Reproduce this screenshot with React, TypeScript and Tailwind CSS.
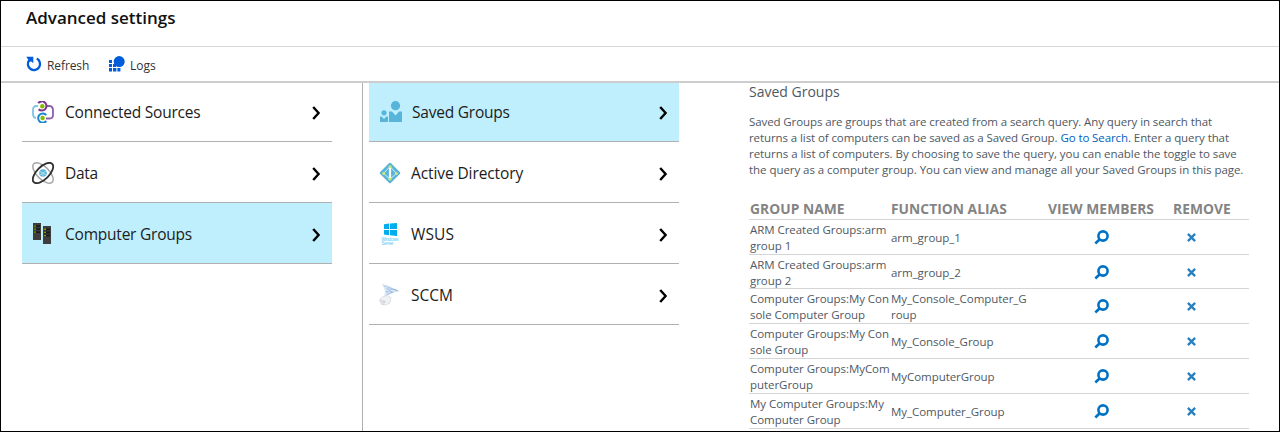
import type { ReactNode } from 'react';

function RefreshIcon() {
  return (
    <svg width="16" height="17" viewBox="0 0 16 17" className="block">
      <path d="M10.8 2.6A6.1 6.1 0 1 1 3 4.4" fill="none" stroke="#015cda" strokeWidth="2.3" />
      <path d="M0.3 0.7H7.3V7.2L5 5.2L3.6 6.2L1.9 3.3Z" fill="#015cda" />
    </svg>
  );
}

function LogsIcon() {
  return (
    <svg width="16" height="16" viewBox="0 0 16 16" className="block" fill="#015cda">
      <circle cx="10.2" cy="5.6" r="5.5" />
      <path d="M0 4h3v3H0zM0 8h3v3H0zM0 12h3v3.4H0zM4 8h3v3H4zM4 12h3.4v3.4H4zM8.4 12h3v3.4h-3z" />
    </svg>
  );
}

function SourcesIcon() {
  return (
    <svg width="22" height="22" viewBox="0 0 22 22" className="block" fill="none" strokeWidth="1.8">
      <path d="M6 5H4.5Q1 5 1 8.5V13Q1 16.5 4 17.2" stroke="#7fc4e6" />
      <path d="M15 5h2.5Q21 5.5 21 9v5q0 3.5-3.5 3.5H14" stroke="#8d5fae" />
      <path d="M6.2 2.2A4.6 4.6 0 1 1 6.6 8.2" stroke="#7b3591" strokeWidth="2" />
      <path d="M14.3 14.2A4.6 4.6 0 1 0 14.3 20" stroke="#1f87d2" strokeWidth="2" />
      <circle cx="10.3" cy="5.2" r="2.2" fill="#84bd00" />
      <circle cx="10.6" cy="17" r="2.2" fill="#84bd00" />
    </svg>
  );
}

function DataIcon() {
  return (
    <svg width="22" height="22" viewBox="0 0 22 22" className="block" fill="none">
      <ellipse cx="11" cy="11" rx="13" ry="6.2" transform="rotate(45 11 11)" stroke="#a8a8a8" strokeWidth="1.5" />
      <circle cx="11" cy="11" r="3.8" fill="#59b4d9" />
      <path d="M8 9.5l3 1.5 3-2M11 11v3.5M8 13l3-2 3 2" stroke="#c4e6f4" strokeWidth=".8" />
      <ellipse cx="11" cy="11" rx="13" ry="6.2" transform="rotate(-45 11 11)" stroke="#303030" strokeWidth="1.8" />
    </svg>
  );
}

function ServersIcon() {
  return (
    <svg width="20" height="22" viewBox="0 0 20 22" className="block">
      <path d="M1 0h8v17H1z" fill="#3e3e3e" />
      <path d="M11 3h8v18H11z" fill="#3e3e3e" />
      <path d="M2 2.2h6v1.8H2zM2 5.2h6V7H2zM2 8.2h6V10H2zM12 5.4h6v1.8h-6zM12 8.6h6v1.8h-6zM12 11.8h6v1.8h-6z" fill="#1b1b1b" />
      <path d="M2.3 2.4h1.5v1.3H2.3zM2.3 5.4h1.5v1.3H2.3zM2.3 8.4h1.5v1.3H2.3zM12.3 5.6h1.5v1.3h-1.5zM12.3 8.8h1.5v1.3h-1.5zM12.3 12h1.5v1.3h-1.5z" fill="#a4c400" />
    </svg>
  );
}

function PeopleIcon() {
  return (
    <svg width="23" height="22" viewBox="-1 0 23 22" className="block" fill="#59b4d9">
      <circle cx="15.5" cy="4.7" r="4.6" />
      <path d="M9 10.5h3l3.5 4 3.5-4h3V21H9z" />
      <circle cx="4" cy="11.8" r="2.6" />
      <path d="M0 15.5h1.8L4 18l2.2-2.5H8V21H0z" />
    </svg>
  );
}

function DirectoryIcon() {
  return (
    <svg width="22" height="22" viewBox="0 0 22 22" className="block">
      <rect x="3.3" y="3.3" width="15.4" height="15.4" rx="1.5" transform="rotate(45 11 11)" fill="#59b4d9" />
      <path d="M11 4.5L4.5 11.5L11 17L17.5 11.5Z" fill="none" stroke="#d3ecf6" strokeWidth="1" />
      <path d="M11 5v12" stroke="#fff" strokeWidth="2.2" />
      <circle cx="11" cy="4.7" r="1.5" fill="#cde67a" />
      <circle cx="4.6" cy="11.5" r="1.5" fill="#cde67a" />
      <circle cx="17.4" cy="11.5" r="1.5" fill="#cde67a" />
      <circle cx="11" cy="17" r="1.6" fill="#cde67a" />
    </svg>
  );
}

function WindowsServerIcon() {
  return (
    <svg width="22" height="22" viewBox="0 0 22 22" className="block" fill="#00adef">
      <path d="M5 1.3L10 .6v5.4H5zM11 .5L18 0v6h-7zM5 7h5v5.2l-5-.7zM11 7h7V13l-7-.8z" />
      <text x="2.500" y="17.500" fontSize="4.500" textLength="17" opacity=".7" fontFamily="Liberation Sans, sans-serif">Windows</text>
      <text x="2.500" y="21.500" fontSize="4.500" textLength="12" opacity=".7" fontFamily="Liberation Sans, sans-serif">Server</text>
    </svg>
  );
}

function SystemCenterIcon() {
  return (
    <svg width="22" height="22" viewBox="0 0 22 22" className="block" fill="none" strokeLinejoin="round">
      <path d="M3.500 .5L9 2l10.500 5L13.500 8.500 5.500 12.500Q8 7 3.500 .5z" fill="#e6eff8" stroke="#c5d7ea" strokeWidth=".6" />
      <path d="M5 2l13.500 4.500-11-1.800 6 3.500-6.500-1 2 2.500M7.500 10.500l7-2.500" stroke="#7faadb" strokeWidth=".6" />
      <path d="M.3 16Q2.500 12 8.500 11.500L12 13.500 11 19Q7 22 2.500 20.500L.3 16z" fill="#f0f1f3" stroke="#d3d7db" strokeWidth=".7" />
      <path d="M1 16l5 1.500L4 20.500M2 18.500l4-1" stroke="#b9bec5" strokeWidth=".6" />
    </svg>
  );
}

function Chevron() {
  return (
    <svg width="9" height="15" viewBox="0 0 9 15" className="block shrink-0">
      <path d="M1.200 2L6.600 8L1.200 14" fill="none" stroke="#000" strokeWidth="2.400" />
    </svg>
  );
}

function SearchIcon() {
  return (
    <svg width="15" height="15" viewBox="0 0 15 15" className="block">
      <circle cx="9" cy="6" r="4.600" fill="none" stroke="#0072c6" strokeWidth="2.600" />
      <path d="M5.500 9.500L1.300 13.500" stroke="#0072c6" strokeWidth="2.600" />
    </svg>
  );
}

function RemoveIcon() {
  return (
    <svg width="9" height="9" viewBox="0 0 9 9" className="block">
      <path d="M.9.900l7.200 7.200M8.100.900L.9 8.100" stroke="#2a80be" strokeWidth="2.300" />
    </svg>
  );
}

type Item = { label: string; icon: ReactNode; text: string; selected?: boolean };

const settings: Item[] = [
  { label: 'Connected Sources', icon: <SourcesIcon />, text: 'tracking-[-0.22px]' },
  { label: 'Data', icon: <DataIcon />, text: 'tracking-[-0.3px]' },
  { label: 'Computer Groups', icon: <ServersIcon />, text: 'tracking-[-0.22px]', selected: true },
];

const groupTypes: Item[] = [
  { label: 'Saved Groups', icon: <PeopleIcon />, text: 'tracking-[-0.22px]', selected: true },
  { label: 'Active Directory', icon: <DirectoryIcon />, text: '-ml-px tracking-[-0.1px]' },
  { label: 'WSUS', icon: <WindowsServerIcon />, text: '-ml-px tracking-[0.1px]' },
  { label: 'SCCM', icon: <SystemCenterIcon />, text: '-ml-px tracking-[-0.05px]' },
];

function NavList({ items }: { items: Item[] }) {
  return (
    <ul className="w-[310px]">
      {items.map((item) => (
        <li
          key={item.label}
          className={`flex h-[61px] items-center border-b border-[#b0b0b0] pt-[2px] pr-[11px] pl-[10px] text-[15.5px] text-[#1c1c1c] first:h-[59px] first:pt-0 ${
            item.selected ? 'bg-[#bfeffd]' : 'bg-white'
          }`}
        >
          <span className="w-[33px]">{item.icon}</span>
          <span className={`grow pt-[2px] whitespace-nowrap ${item.text}`}>{item.label}</span>
          <Chevron />
        </li>
      ))}
    </ul>
  );
}

type Row = { name: string[]; alias: string[]; height: string };

const rows: Row[] = [
  { name: ['ARM Created Groups:arm', 'group 1'], alias: ['arm_group_1'], height: 'h-[35px]' },
  { name: ['ARM Created Groups:arm', 'group 2'], alias: ['arm_group_2'], height: 'h-[34px]' },
  { name: ['Computer Groups:My Con', 'sole Computer Group'], alias: ['My_Console_Computer_G', 'roup'], height: 'h-[35px]' },
  { name: ['Computer Groups:My Con', 'sole Group'], alias: ['My_Console_Group'], height: 'h-[35px]' },
  { name: ['Computer Groups:MyCom', 'puterGroup'], alias: ['MyComputerGroup'], height: 'h-[35px]' },
  { name: ['My Computer Groups:My', 'Computer Group'], alias: ['My_Computer_Group'], height: 'h-[35px]' },
];

function Lines({ lines }: { lines: string[] }) {
  return (
    <div className="flex h-[34px] flex-col justify-center pt-px whitespace-nowrap">
      {lines.map((line) => (
        <div key={line} className="h-4">{line}</div>
      ))}
    </div>
  );
}

const columns = 'grid grid-cols-[141px_157px_125px_76px] pl-px';

function GroupTable() {
  return (
    <div className="mt-[22px] w-[500px] text-[11.5px] leading-4 tracking-[-0.05px]">
      <div className={`${columns} h-[20px] border-b border-[#d5d5d5] pt-px text-[13.8px] font-bold tracking-[0.03px] text-[#848484]`}>
        <div>GROUP NAME</div>
        <div>FUNCTION ALIAS</div>
        <div>VIEW MEMBERS</div>
        <div>REMOVE</div>
      </div>
      {rows.map((row) => (
        <div key={row.name.join()} className={`${columns} ${row.height} border-b border-[#d5d5d5]`}>
          <Lines lines={row.name} />
          <Lines lines={row.alias} />
          <div className="pt-[10px] pl-[46px]"><SearchIcon /></div>
          <div className="pt-[13px] pl-[14px]"><RemoveIcon /></div>
        </div>
      ))}
    </div>
  );
}

export default function App() {
  return (
    <div className="flex h-[432px] w-[1280px] flex-col overflow-hidden border border-black bg-white font-['Open_Sans',sans-serif]">
      <header className="h-[46px] shrink-0 border-b border-[#d6d6d6] pt-[5px] pl-[25px]">
        <h1 className="text-[17px] leading-6 font-semibold text-[#111]">Advanced settings</h1>
      </header>
      <div className="flex h-[36px] shrink-0 items-center border-b-2 border-[#cdcdcd] pl-[25px] text-[12px] text-[#333]">
        <RefreshIcon />
        <span className="w-[67px] pt-[3px] pl-[5px] tracking-[-0.1px]">Refresh</span>
        <LogsIcon />
        <span className="pt-[3px] pl-[5px]">Logs</span>
      </div>
      <div className="flex min-h-0 grow">
        <nav className="w-[361px] shrink-0 pl-[21px]">
          <NavList items={settings} />
        </nav>
        <nav className="w-[379px] shrink-0 border-l border-[#b0b0b0] pl-[6px]">
          <NavList items={groupTypes} />
        </nav>
        <main className="-ml-px grow pl-[9px] text-[#4f5862]">
          <h2 className="text-[14px] leading-[18px]">Saved Groups</h2>
          <p className="mt-[13px] text-[11.5px] leading-4 tracking-[-0.05px] whitespace-nowrap">
            <span className="block tracking-[-0.1px]">Saved Groups are groups that are created from a search query. Any query in search that</span>
            <span className="block tracking-[-0.09px]">
              returns a list of computers can be saved as a Saved Group. <a className="text-[#0060bd]">Go to Search.</a> Enter a query that
            </span>
            <span className="block">returns a list of computers. By choosing to save the query, you can enable the toggle to save</span>
            <span className="block">the query as a computer group. You can view and manage all your Saved Groups in this page.</span>
          </p>
          <GroupTable />
        </main>
      </div>
    </div>
  );
}
